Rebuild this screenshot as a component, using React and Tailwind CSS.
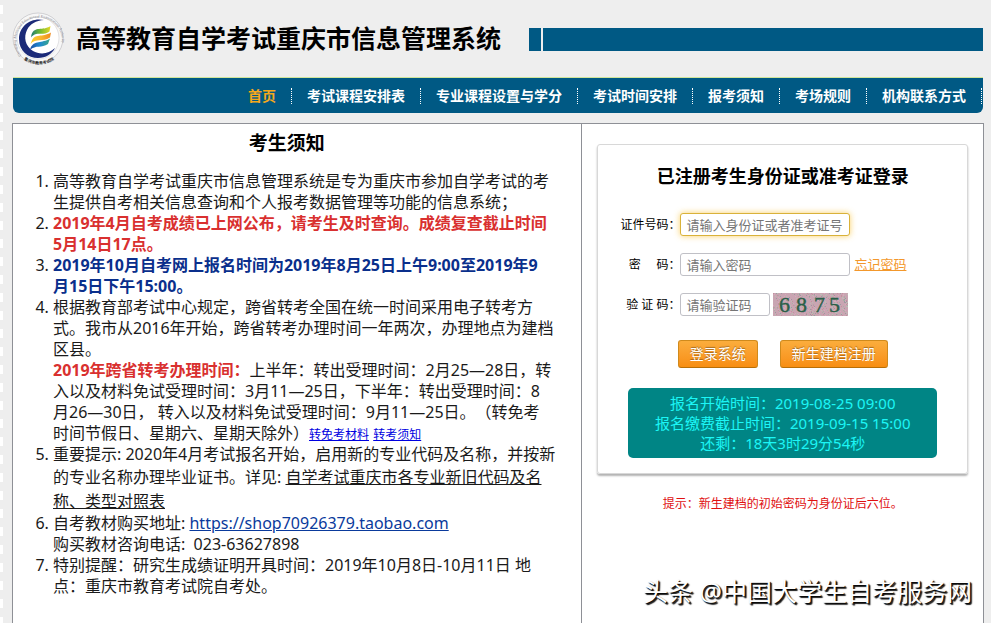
const navItems = [
  "首页",
  "考试课程安排表",
  "专业课程设置与学分",
  "考试时间安排",
  "报考须知",
  "考场规则",
  "机构联系方式",
];

const inputClass =
  "h-[23px] rounded-[3px] border bg-white px-[5px] text-[13px] text-black outline-none placeholder:text-[#757575]";

const buttonClass =
  "h-7 cursor-pointer rounded-[3px] border border-[#d08a1c] border-b-[#b86f08] bg-gradient-to-b from-[#fbad3c] to-[#f88e11] px-[11px] text-sm text-white [text-shadow:0_-1px_1px_rgba(0,0,0,0.35)]";

const Logo = () => (
  <svg viewBox="0 0 54 54" className="h-[54px] w-[54px] shrink-0" aria-hidden="true">
    <defs>
      <linearGradient id="ribbonTop" x1="0" y1="0" x2="1" y2="0">
        <stop offset="0" stopColor="#1d7a75" />
        <stop offset="0.45" stopColor="#6cb832" />
        <stop offset="1" stopColor="#e4d726" />
      </linearGradient>
      <linearGradient id="ribbonMiddle" x1="0" y1="0" x2="1" y2="0">
        <stop offset="0" stopColor="#f9d02e" />
        <stop offset="0.5" stopColor="#f9b62e" />
        <stop offset="1" stopColor="#ee8a1e" />
      </linearGradient>
      <linearGradient id="ribbonBottom" x1="0" y1="0" x2="1" y2="0">
        <stop offset="0" stopColor="#1a4fa4" />
        <stop offset="0.5" stopColor="#1f8bd0" />
        <stop offset="1" stopColor="#3aa685" />
      </linearGradient>
      <path id="ringTop" d="M9.500 43.500A23 23 0 1 1 44.500 43.500" />
      <path id="ringBottom" d="M8 44A25.500 25.500 0 0 0 46 44" />
    </defs>
    <circle cx="26" cy="26" r="25" fill="#f7f7f7" stroke="#b9b9bd" strokeWidth="0.6" />
    <circle cx="26" cy="26" r="21" fill="#fff" stroke="#c9c9cd" strokeWidth="0.5" />
    <text fontSize="3.8" fill="#77777f" fontFamily="Liberation Serif">
      <textPath href="#ringTop">
        Chongqing Municipal Educational Examinations Authority
      </textPath>
    </text>
    <text fontSize="4" fontWeight="bold" fill="#222" fontFamily="Noto Sans CJK SC">
      <textPath href="#ringBottom" startOffset="50%" textAnchor="middle">
        重庆市教育考试院
      </textPath>
    </text>
    <path
      d="M32 8C19 5 7 14 7 27C7 39 16 46 26 46C34 46 40 42 43 36C37 42 28 43 21 39C13 34 11.500 25 15 18C18 12 24 8.500 32 8Z"
      fill="#1b2a78"
    />
    <path
      d="M19.500 22.500C23 13.500 30 19.500 38.500 14L37.500 19.500C30.500 24.500 24.500 18.500 19 25.500Z"
      fill="url(#ribbonTop)"
    />
    <path
      d="M19.500 29.500C23 20.500 30 26 39 20.500L38 25.500C30.500 30.500 24 25.500 18.500 32Z"
      fill="url(#ribbonMiddle)"
    />
    <path
      d="M18.500 36C22.500 27.500 29.500 32 38 26.500L36 32C29.500 36.500 24 32.500 18 38Z"
      fill="url(#ribbonBottom)"
    />
  </svg>
);

const captchaColors = ["#c4909f", "#a8b0a6", "#d8a9bc", "#9d9aa0", "#b8c0b4"];
const captchaNoise = Array.from({ length: 420 }, (_, i) => ({
  x: (i * 37 + ((i * i) % 11) * 5) % 75,
  y: (i * 17 + ((i * i) % 7) * 3) % 23,
  fill: captchaColors[(i * 7 + (i % 3)) % 5],
}));

const Captcha = () => (
  <svg viewBox="0 0 75 23" className="h-[23px] w-[75px]" role="img" aria-label="验证码">
    <rect width="75" height="23" fill="#c9a5b2" />
    {captchaNoise.map((dot, i) => (
      <rect key={i} x={dot.x} y={dot.y} width="1" height="1" fill={dot.fill} />
    ))}
    <g
      fontFamily="Liberation Serif"
      fontSize="22"
      fill="#2a5f48"
      stroke="#2a5f48"
      strokeWidth="0.4"
    >
      <text x="6" y="19">6</text>
      <text x="23" y="19">8</text>
      <text x="41" y="19">7</text>
      <text x="56" y="19">5</text>
    </g>
  </svg>
);

const Header = () => (
  <header>
    <div className="flex h-[77px] items-center pt-px">
      <Logo />
      <h1 className="ml-2.5 shrink-0 text-[25px] font-bold text-black">
        高等教育自学考试重庆市信息管理系统
      </h1>
      <div className="ml-7 h-[23px] w-3 shrink-0 bg-[#005984]" />
      <div className="mr-px ml-0.5 h-[23px] flex-1 bg-[#005984]" />
    </div>
    <nav className="mx-px flex h-9 items-center justify-end rounded-b-md border-t border-[#cfe59a] bg-[#005984] pr-px">
      {navItems.map((item, i) => (
        <a
          key={item}
          href="#"
          className={`flex h-4 items-center border-r border-dotted border-white px-[15px] text-sm font-bold whitespace-nowrap ${
            i === 0 ? "text-[#f5a81c]" : "text-white"
          }`}
        >
          {item}
        </a>
      ))}
    </nav>
  </header>
);

const Notice = () => (
  <section className="border-r border-[#8e9096] pt-[7px] pr-[21px]">
    <h2 className="text-center text-[19px] leading-6 font-bold text-black">考生须知</h2>
    <ol className="mt-4 list-decimal pl-10 text-base leading-[21px] text-[#1a1a1a]">
      <li>
        高等教育自学考试重庆市信息管理系统是专为重庆市参加自学考试的考生提供自考相关信息查询和个人报考数据管理等功能的信息系统；
      </li>
      <li>
        <strong className="text-[#d9302f]">
          2019年4月自考成绩已上网公布，请考生及时查询。成绩复查截止时间
          <br />
          5月14日17点。
        </strong>
      </li>
      <li>
        <strong className="text-[#0a2f8c]">
          2019年10月自考网上报名时间为2019年8月25日上午9:00至2019年9
          <br />
          月15日下午15:00。
        </strong>
      </li>
      <li>
        根据教育部考试中心规定，跨省转考全国在统一时间采用电子转考方式。我市从2016年开始，跨省转考办理时间一年两次，办理地点为建档区县。
        <br />
        <strong className="text-[#d9302f]">2019年跨省转考办理时间：</strong>
        上半年：转出受理时间：2月25—28日，转入以及材料免试受理时间：3月11—25日，下半年：转出受理时间：8
        <br />
        月26—30日， 转入以及材料免试受理时间：9月11—25日。（转免考
        <br />
        时间节假日、星期六、星期天除外）
        <a href="#" className="text-xs leading-4 text-[#0000e0] underline">转免考材料</a>{" "}
        <a href="#" className="text-xs leading-4 text-[#0000e0] underline">转考须知</a>
      </li>
      <li>
        重要提示: 2020年4月考试报名开始，启用新的专业代码及名称，并按新的专业名称办理毕业证书。详见:{" "}
        <a href="#" className="leading-6 underline">
          自学考试重庆市各专业新旧代码及名称、类型对照表
        </a>
      </li>
      <li>
        自考教材购买地址:{" "}
        <a href="#" className="text-[#0a3a9c] underline">
          https://shop70926379.taobao.com
        </a>
        <br />
        购买教材咨询电话:&nbsp; 023-63627898
      </li>
      <li>
        特别提醒：研究生成绩证明开具时间：2019年10月8日-10月11日 地点：重庆市教育考试院自考处。
      </li>
    </ol>
  </section>
);

const LoginForm = () => (
  <form
    onSubmit={(e) => e.preventDefault()}
    className="rounded-[3px] border border-[#d8d8d8] pt-[18px] pb-[15px] shadow-[0_2px_2px_rgba(0,0,0,0.3)]"
  >
    <h2 className="text-center text-lg leading-[26px] font-bold text-black">
      已注册考生身份证或准考证登录
    </h2>
    <div className="mt-6 flex flex-col gap-[17px] text-black">
      <div className="flex h-[23px] items-center">
        <label htmlFor="idNumber" className="w-[82px] text-right text-xs">证件号码：</label>
        <input
          id="idNumber"
          type="text"
          placeholder="请输入身份证或者准考证号"
          className={`${inputClass} w-[170px] border-[#d9b23a] shadow-[0_0_6px_rgba(250,190,40,0.7)]`}
        />
      </div>
      <div className="flex h-[23px] items-center">
        <label htmlFor="password" className="w-[82px] text-right text-xs">
          密&nbsp;&nbsp;&nbsp;&nbsp;&nbsp;码：
        </label>
        <input
          id="password"
          type="password"
          placeholder="请输入密码"
          className={`${inputClass} w-[170px] border-[#c0c0c6]`}
        />
        <a href="#" className="ml-1 text-[13px] text-[#f3982c] underline">忘记密码</a>
      </div>
      <div className="flex h-[23px] items-center">
        <label htmlFor="captcha" className="w-[82px] text-right text-xs">
          验&nbsp;证&nbsp;码：
        </label>
        <input
          id="captcha"
          type="text"
          placeholder="请输验证码"
          className={`${inputClass} mr-[3px] w-[90px] border-[#c0c0c6]`}
        />
        <Captcha />
      </div>
    </div>
    <div className="mt-6 flex justify-center gap-[22px]">
      <button type="submit" className={buttonClass}>登录系统</button>
      <button type="button" className={buttonClass}>新生建档注册</button>
    </div>
    <div className="mx-[30px] mt-5 rounded-[5px] bg-[#008585] py-[5px] text-center text-[15px] leading-5 text-[#1cf6f6]">
      <p>报名开始时间：2019-08-25 09:00</p>
      <p>报名缴费截止时间：2019-09-15 15:00</p>
      <p>还剩：18天3时29分54秒</p>
    </div>
  </form>
);

const App = () => {
  return (
    <div className="relative flex min-h-screen bg-[#eeeeee] font-['Noto_Sans','Noto_Sans_CJK_SC',sans-serif] [text-spacing-trim:space-all]">
      {/* Dashed strip on the left edge */}
      <div className="w-[3px] shrink-0 bg-[repeating-linear-gradient(to_bottom,#eeeeee_0px,#eeeeee_5px,#ffffff_5px,#ffffff_14px,#eeeeee_14px,#eeeeee_18px)]" />
      <div className="flex min-w-0 flex-1 flex-col pr-[7px] pl-[9px]">
        <Header />
        <main className="mt-2.5 grid flex-1 grid-cols-[570fr_401fr] border border-b-0 border-[#8e9096] bg-white">
          <Notice />
          <section className="px-[15px] pt-5">
            <LoginForm />
            <p className="mt-5 text-center text-xs leading-5 text-[#e01010]">
              提示：新生建档的初始密码为身份证后六位。
            </p>
          </section>
        </main>
      </div>
      <p className="absolute right-[19px] bottom-3.5 text-[25px] leading-9 text-white [text-shadow:1px_1px_1px_#000,2px_2px_1px_#222]">
        头条 @中国大学生自考服务网
      </p>
    </div>
  );
};

export default App;
